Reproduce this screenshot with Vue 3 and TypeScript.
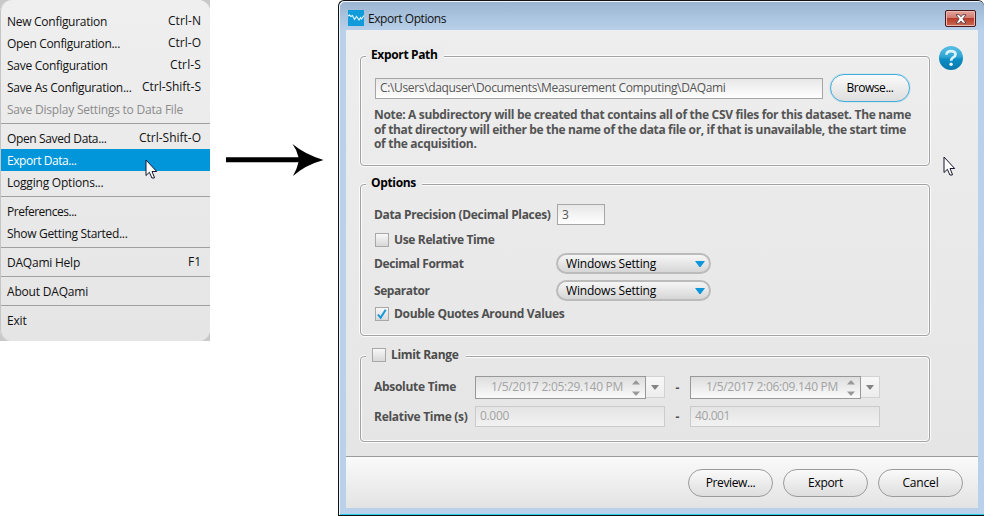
<script setup lang="ts">
import type { Directive } from 'vue'

interface MenuItem {
  label: string
  width: number
  keys?: string
  keysWidth?: number
  state?: 'disabled' | 'active'
}

const menuGroups: MenuItem[][] = [
  [
    { label: 'New Configuration', width: 100, keys: 'Ctrl-N', keysWidth: 33 },
    { label: 'Open Configuration...', width: 113, keys: 'Ctrl-O', keysWidth: 33 },
    { label: 'Save Configuration', width: 100.5, keys: 'Ctrl-S', keysWidth: 31 },
    { label: 'Save As Configuration...', width: 124.5, keys: 'Ctrl-Shift-S', keysWidth: 59 },
    { label: 'Save Display Settings to Data File', width: 176, state: 'disabled' },
  ],
  [
    { label: 'Open Saved Data...', width: 99.5, keys: 'Ctrl-Shift-O', keysWidth: 62 },
    { label: 'Export Data...', width: 69.5, state: 'active' },
    { label: 'Logging Options...', width: 96.5 },
  ],
  [
    { label: 'Preferences...', width: 69.5 },
    { label: 'Show Getting Started...', width: 120.5 },
  ],
  [{ label: 'DAQami Help', width: 73, keys: 'F1', keysWidth: 13 }],
  [{ label: 'About DAQami', width: 81 }],
  [{ label: 'Exit', width: 19.5 }],
]

const noteLines = [
  { text: 'Note: A subdirectory will be created that contains all of the CSV files for this dataset. The name', width: 537 },
  { text: 'of that directory will either be the name of the data file or, if that is unavailable, the start time', width: 532 },
  { text: 'of the acquisition.', width: 102.5 },
]

const combos = [
  { label: 'Decimal Format', width: 89.5 },
  { label: 'Separator', width: 55.5 },
]

const dates = ['1/5/2017 2:05:29.140 PM', '1/5/2017 2:06:09.140 PM']

const actions = [
  { label: 'Preview...', width: 49.5 },
  { label: 'Export', width: 35 },
  { label: 'Cancel', width: 36 },
]

// Tracks a label so that it fills the given width.
const vFit: Directive<HTMLElement, number> = {
  mounted(el, { value }) {
    const count = (el.textContent ?? '').length
    const natural = el.getBoundingClientRect().width
    el.style.letterSpacing = `${(value - natural) / count}px`
  },
}
</script>

<template>
  <main class="stage">
    <nav class="menu">
      <div v-for="(group, g) in menuGroups" :key="g" class="menu-group">
        <div v-for="item in group" :key="item.label" class="menu-item" :class="item.state">
          <span v-fit="item.width" class="t">{{ item.label }}</span>
          <span v-if="item.keys" v-fit="item.keysWidth ?? 0" class="t keys">{{ item.keys }}</span>
        </div>
      </div>
    </nav>

    <svg class="arrow" width="98" height="34" viewBox="0 0 98 34">
      <path d="M0 14.2H72.500Q71 7 66.500 1Q79 11.500 97.500 16.900Q79 22 67 33Q71 26 72.500 19.300H0Z" fill="#000" />
    </svg>

    <section class="window">
      <header class="titlebar">
        <svg class="app-icon" width="16" height="16" viewBox="0 0 16 16">
          <rect width="16" height="16" fill="#109cdb" />
          <path d="M0 6L1.500 5L3 6.500L4.500 5.500L6.500 9.500L8.500 6.500L11 10L12.500 7.500L13.500 9L16 5.500" fill="none" stroke="#e4f7ff" stroke-width="1.100" />
        </svg>
        <span v-fit="78" class="t title">Export Options</span>
        <button class="close">
          <svg width="12" height="10" viewBox="0 0 12 10">
            <path d="M1 .7H4.300L6 2.800L7.700 .7H11L7.900 4.900L11 9.200H7.700L6 7L4.300 9.200H1L4.100 4.900Z" fill="#fff" stroke="#5a3b42" stroke-width=".9" />
          </svg>
        </button>
      </header>

      <div class="panel">
        <div class="content">
          <div class="groups">
            <section class="group path-group">
              <div class="legend"><span v-fit="66.5" class="t">Export Path</span></div>
              <div class="path-row">
                <div class="input path"><span v-fit="345.5" class="t">C:\Users\daquser\Documents\Measurement Computing\DAQami</span></div>
                <button class="pill browse"><span v-fit="47" class="t">Browse...</span></button>
              </div>
              <div class="note">
                <span v-for="line in noteLines" :key="line.text" v-fit="line.width" class="t">{{ line.text }}</span>
              </div>
            </section>

            <section class="group options-group">
              <div class="legend"><span v-fit="45" class="t">Options</span></div>
              <div class="row precision">
                <span class="label"><span v-fit="176.5" class="t">Data Precision (Decimal Places)</span></span>
                <div class="input number"><span class="t">3</span></div>
              </div>
              <div class="row check-row">
                <i class="check" />
                <span v-fit="100.5" class="t">Use Relative Time</span>
              </div>
              <div v-for="c in combos" :key="c.label" class="row combo-row">
                <span class="label"><span v-fit="c.width" class="t">{{ c.label }}</span></span>
                <div class="combo">
                  <span v-fit="90" class="t">Windows Setting</span>
                  <svg width="10" height="6" viewBox="0 0 10 6"><path d="M0 0H10L5.600 6H4.400Z" fill="#0d96d9" /></svg>
                </div>
              </div>
              <div class="row check-row last">
                <i class="check">
                  <svg width="12" height="12" viewBox="0 0 12 12"><path d="M2 6.500L4.600 9.800L9.700 1.800" fill="none" stroke="#1398dc" stroke-width="2" /></svg>
                </i>
                <span v-fit="170.5" class="t">Double Quotes Around Values</span>
              </div>
            </section>

            <section class="group range-group">
              <div class="legend limit">
                <i class="check" />
                <span v-fit="67.5" class="t">Limit Range</span>
              </div>
              <div class="row time-row">
                <span class="label"><span v-fit="82" class="t">Absolute Time</span></span>
                <template v-for="(d, i) in dates" :key="d">
                  <span v-if="i" class="dash">-</span>
                  <div class="picker">
                    <div class="date">
                      <span v-fit="132" class="t">{{ d }}</span>
                      <svg width="8" height="16" viewBox="0 0 8 16"><path d="M0 4.500H8L4.500 .5H3.500ZM0 11.500H8L4.500 15.500H3.500Z" fill="#999" /></svg>
                    </div>
                    <div class="drop"><svg width="8" height="5" viewBox="0 0 8 5"><path d="M0 0H8L4.500 4.500H3.500Z" fill="#858585" /></svg></div>
                  </div>
                </template>
              </div>
              <div class="row relative-row">
                <span class="label"><span v-fit="93.5" class="t">Relative Time (s)</span></span>
                <div class="input muted"><span v-fit="29" class="t">0.000</span></div>
                <span class="dash">-</span>
                <div class="input muted"><span v-fit="35" class="t">40.001</span></div>
              </div>
            </section>
          </div>

          <svg class="help" width="26" height="26" viewBox="0 0 26 26">
            <defs>
              <linearGradient id="orb" x1="0" y1="0" x2="0" y2="1">
                <stop offset="0" stop-color="#58bfe4" />
                <stop offset=".45" stop-color="#2fa5d3" />
                <stop offset=".55" stop-color="#0c8dc2" />
                <stop offset="1" stop-color="#0a78ad" />
              </linearGradient>
            </defs>
            <circle cx="13" cy="13" r="12" fill="url(#orb)" />
            <path d="M8.500 9.800Q8.700 6.200 13 6.200Q17.500 6.200 17.500 9.400Q17.500 11.200 15.200 12.400Q13.100 13.500 13.100 15.800" fill="none" stroke="#d9f3fc" stroke-width="2.700" />
            <circle cx="13.100" cy="19.300" r="1.700" fill="#e9f9ff" />
          </svg>
        </div>

        <footer class="footer">
          <button v-for="a in actions" :key="a.label" class="pill"><span v-fit="a.width" class="t">{{ a.label }}</span></button>
        </footer>
      </div>
    </section>

    <svg class="pointer on-menu" width="13" height="21" viewBox="0 0 13 21"><path d="M1 1V16.500L4.400 13.300L6.900 19H9.300V18L7 12.500H11.700Z" fill="#fff" stroke="#15152c" /></svg>
    <svg class="pointer on-window" width="13" height="21" viewBox="0 0 13 21"><path d="M1 1V16.500L4.400 13.300L6.900 19H9.300V18L7 12.500H11.700Z" fill="#fff" stroke="#15152c" /></svg>
  </main>
</template>

<style>
body {
  margin: 0;
  background: #fff;
}
</style>

<style scoped>
* {
  box-sizing: border-box;
}
.stage {
  position: relative;
  display: flex;
  align-items: flex-start;
  width: 984px;
  height: 516px;
  overflow: hidden;
  font: 12px/16px 'Open Sans', 'Noto Sans', sans-serif;
  color: #111;
}
.t {
  display: inline-block;
  white-space: pre;
}
button {
  font: inherit;
  color: inherit;
  padding: 0;
}
.menu {
  width: 210px;
  height: 341px;
  padding-top: 10px;
  border-left: 1px solid #c5c5c5;
  border-radius: 12px;
  background: linear-gradient(#efefef, #e5e5e5);
  box-shadow: 0 0 0 12px #c9c9c9;
  clip-path: inset(0);
}
.menu-group + .menu-group {
  margin-top: 3px;
  padding-top: 3px;
  border-top: 1px solid #a0a0a0;
}
.menu-item {
  display: flex;
  justify-content: space-between;
  height: 22px;
  padding: 4px 9px 0 6px;
}
.keys {
  margin-top: -1px;
}
.disabled {
  color: #8b8b8b;
}
.active {
  background: #0096d9;
  color: #fff;
}
.arrow {
  margin: 143px 0 0 16px;
}
.window {
  display: flex;
  flex-direction: column;
  flex: none;
  width: 646px;
  height: 516px;
  margin-left: 14px;
  padding: 0 6px 6px 6px;
  border: 1px solid #111;
  border-right: 0;
  border-radius: 6px 6px 0 0;
  background: linear-gradient(#9ab4d1, #b9d1ea 30px, #b9d1ea);
  box-shadow: inset 1px 1px 0 #eef6fc, inset 0 -1px 0 #22cfe5;
}
.titlebar {
  display: flex;
  align-items: flex-start;
  height: 29px;
  padding: 9px 2px 0 3px;
}
.title {
  margin: 1px 0 0 4px;
}
.close {
  display: flex;
  align-items: center;
  justify-content: center;
  width: 31px;
  height: 17px;
  margin-left: auto;
  border: 1px solid #47191f;
  border-radius: 2px;
  background: linear-gradient(#e5a69e, #d27a70 45%, #b73b2b 50%, #cb6a51);
  box-shadow: inset 0 0 0 1px #e9b9b2;
}
.panel {
  display: flex;
  flex-direction: column;
  height: 478px;
  margin-left: 1px;
  background: linear-gradient(#eeeeee, #e5e5e5 426px);
}
.content {
  display: flex;
  height: 426px;
  padding: 26px 0 0 14px;
}
.group {
  width: 570px;
  border: 1px solid #a2a2a2;
  border-radius: 4px;
  box-shadow: 0 0 0 1px #fbfbfb, inset 0 0 0 1px #fbfbfb;
  padding-left: 13px;
}
.path-group {
  height: 110px;
}
.options-group {
  height: 152px;
  margin-top: 18px;
}
.range-group {
  height: 86px;
  margin-top: 20px;
}
.legend {
  display: flex;
  align-items: center;
  width: 78px;
  height: 16px;
  margin: -10px 0 0 -8px;
  padding-left: 5px;
  background: #ececec;
  color: #000;
  font-weight: 700;
}
.options-group .legend {
  width: 56px;
  background: #eaeaea;
}
.legend.limit {
  width: 100px;
  padding-left: 6px;
  gap: 5px;
  background: #e7e7e7;
  color: #4b4b4b;
}
.path-row {
  display: flex;
  gap: 7px;
  align-items: center;
  height: 28px;
  margin-top: 11px;
}
.input {
  display: flex;
  align-items: center;
  height: 21px;
  padding-left: 4px;
  border: 1px solid #a6a6a6;
  background: linear-gradient(#e7e7e7, #fff);
  color: #555;
}
.path {
  width: 448px;
  margin-left: 1px;
}
.pill {
  width: 85px;
  height: 28px;
  border: 1px solid #9b9b9b;
  border-radius: 14px;
  background: linear-gradient(#fafafa, #dedede);
  color: #000;
  text-align: center;
}
.browse {
  width: 80px;
  border: 1.5px solid #43addd;
  box-shadow: 0 0 1px #43addd;
}
.note {
  display: flex;
  flex-direction: column;
  align-items: flex-start;
  gap: 0.5px;
  margin-top: 6px;
  font-weight: 700;
  line-height: 14px;
  color: #545454;
}
.row {
  display: flex;
  align-items: center;
  font-weight: 700;
  color: #4f4f4f;
}
.row .input,
.combo,
.picker {
  font-weight: 400;
}
.label {
  width: 182px;
}
.precision {
  height: 21px;
  margin-top: 13px;
}
.number {
  width: 48px;
  margin-left: 1px;
}
.check-row {
  gap: 5px;
  height: 16px;
  margin-top: 7px;
  padding-left: 1px;
}
.check {
  display: flex;
  align-items: center;
  justify-content: center;
  width: 14px;
  height: 14px;
  border: 1px solid #a8a8a8;
  background: linear-gradient(#f8f8f8, #d8d8d8);
}
.combo-row {
  height: 21px;
  margin-top: 5px;
}
.combo-row + .combo-row {
  margin-top: 6px;
}
.combo {
  display: flex;
  align-items: center;
  justify-content: space-between;
  width: 155px;
  height: 21px;
  padding: 0 4px 0 8px;
  border: 2px solid #bbb;
  border-radius: 11px;
  background: linear-gradient(#f6f6f6, #d6d6d6);
  color: #000;
}
.check-row.last {
  margin-top: 5px;
}
.range-group .label {
  width: 101px;
}
.time-row {
  height: 23px;
  margin-top: 13px;
}
.time-row .label,
.relative-row .t {
  margin-top: -1px;
}
.relative-row {
  height: 21px;
  margin-top: 7px;
}
.dash {
  width: 25px;
  text-align: center;
}
.picker {
  display: flex;
  width: 190px;
}
.date {
  display: flex;
  align-items: center;
  justify-content: flex-end;
  gap: 9px;
  width: 171px;
  height: 23px;
  padding-right: 5px;
  border: 1px solid #989898;
  background: linear-gradient(#dedede, #fafafa);
  color: #a3a3a3;
}
.date .t {
  margin-top: -2px;
}
.drop {
  display: flex;
  align-items: center;
  justify-content: center;
  width: 19px;
  height: 22px;
  border: 1px solid #d2d2d2;
  border-left: 0;
  background: linear-gradient(#f7f7f7, #ededed);
}
.muted {
  width: 190px;
  border-color: #cbcbcb;
  background: linear-gradient(#e4e4e4, #f2f2f2);
  color: #a3a3a3;
}
.help {
  margin: -11px 0 0 8px;
}
.footer {
  display: flex;
  justify-content: flex-end;
  gap: 10px;
  height: 52px;
  padding: 12px 15px 0 0;
  border-top: 1px solid #9c9c9c;
  background: linear-gradient(#fafafa, #e3e3e3);
}
.footer .pill {
  height: 28px;
}
.pointer {
  position: absolute;
}
.on-menu {
  left: 145px;
  top: 159px;
}
.on-window {
  left: 943px;
  top: 156px;
}
</style>
